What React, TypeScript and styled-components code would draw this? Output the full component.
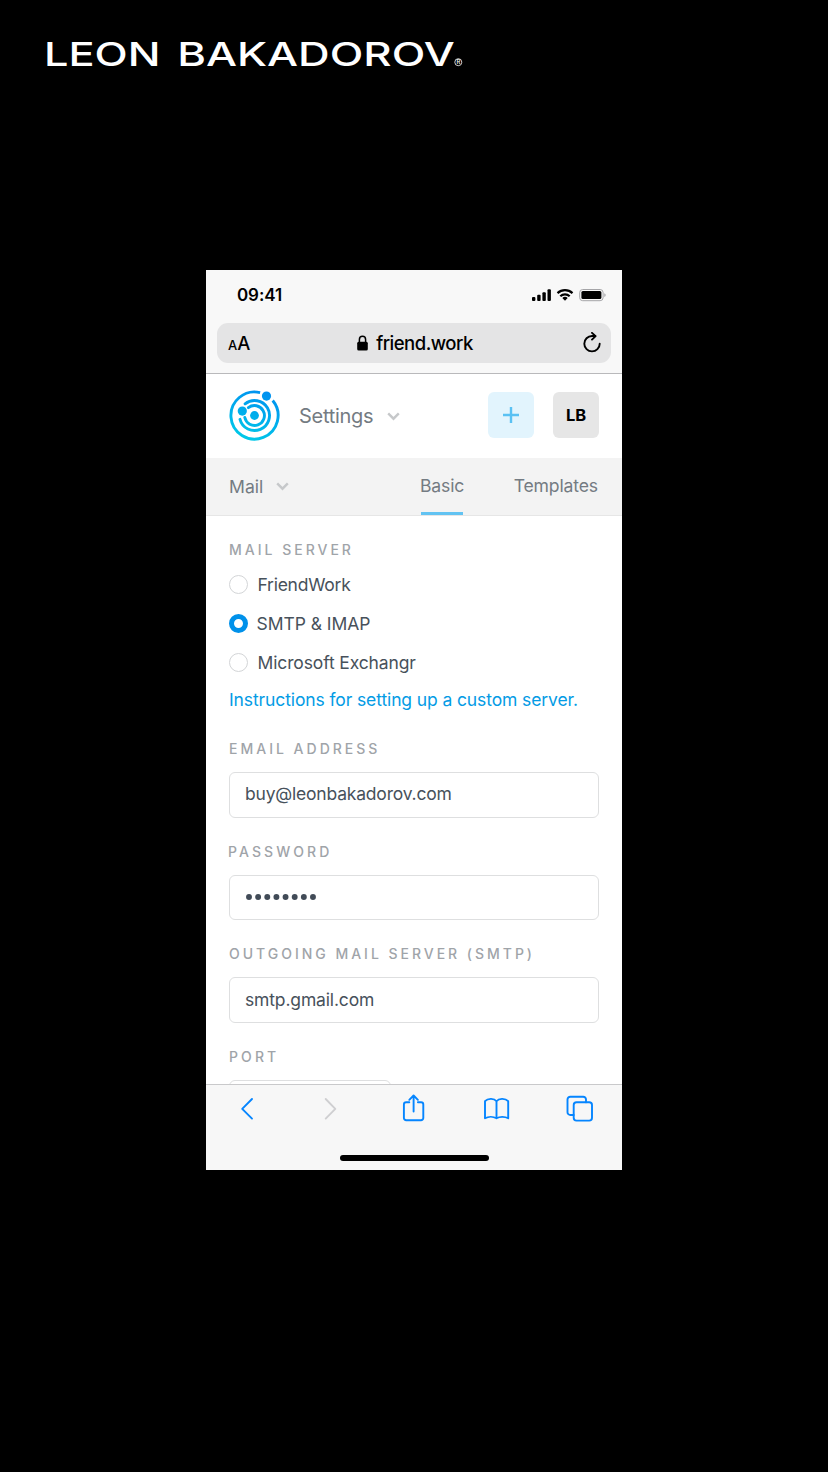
import React from "react";
import styled, { createGlobalStyle } from "styled-components";

const GlobalStyle = createGlobalStyle`
  *, *::before, *::after { box-sizing: border-box; }
  body { margin: 0; background: #000; }
`;

const Page = styled.main`
  width: 828px;
  height: 1472px;
  display: flex;
  flex-direction: column;
  align-items: center;
  background: #000;
  font-family: Inter, "Liberation Sans", sans-serif;
  overflow: hidden;
`;

const Masthead = styled.header`
  width: 100%;
  height: 270px;
  flex: none;
  padding: 20px 0 0 30px;
  svg { display: block; }
`;

const Phone = styled.section`
  width: 416px;
  height: 900px;
  display: flex;
  flex-direction: column;
  background: #fff;
  overflow: hidden;
`;

const BrowserTop = styled.div`
  height: 104px;
  flex: none;
  background: #f8f8f8;
  border-bottom: 1px solid #b9b9bb;
`;

const StatusBar = styled.div`
  height: 53px;
  padding: 0 16px 3px 31px;
  display: flex;
  align-items: center;
  justify-content: space-between;
  color: #000;
  font-size: 17px;
  font-weight: 600;
  letter-spacing: -0.1px;
`;

const AddressBar = styled.div`
  height: 40px;
  margin: 0 11px;
  padding: 0 9px 0 11px;
  display: flex;
  align-items: center;
  justify-content: space-between;
  border-radius: 11px;
  background: #e4e4e5;
  color: #000;
  font-weight: 500;
`;

const TextSize = styled.span`
  width: 20px;
  font-size: 18.5px;
  white-space: nowrap;
  small { font-size: 13px; }
`;

const Domain = styled.span`
  display: flex;
  align-items: center;
  gap: 8px;
  font-size: 18.5px;
  letter-spacing: -0.5px;
  padding-bottom: 1px;
`;

const AppHeader = styled.div`
  height: 84px;
  flex: none;
  padding: 0 23px 2px 22.5px;
  display: flex;
  align-items: center;
  > svg:nth-of-type(2) { margin-top: 3px; }
`;

const Title = styled.h1`
  margin: 0 13.5px 0 19.5px;
  padding-top: 2px;
  font-size: 20px;
  font-weight: 400;
  letter-spacing: -0.3px;
  color: #747b82;
`;

const Square = styled.button<{ $tone: "add" | "user" }>`
  width: 46px;
  height: 46px;
  padding: 0;
  border: 0;
  border-radius: 6px;
  display: flex;
  align-items: center;
  justify-content: center;
  font: 700 16.5px Inter, "Liberation Sans", sans-serif;
  color: #000;
  background: ${(p) => (p.$tone === "add" ? "#e2f4fd" : "#e6e6e6")};
`;

const Actions = styled.div`
  display: flex;
  gap: 19px;
  margin-left: auto;
`;

const TabBar = styled.nav`
  height: 58px;
  flex: none;
  padding: 0 24px 0 23px;
  display: flex;
  align-items: stretch;
  background: #f3f3f3;
  border-bottom: 1px solid #e6e6e6;
  color: #747b82;
  font-size: 17.6px;
  letter-spacing: -0.15px;
`;

const Section = styled.span`
  display: flex;
  align-items: center;
  gap: 13px;
  letter-spacing: 0;
  margin-right: auto;
  padding-bottom: 1px;
`;

const Tab = styled.a<{ $active?: boolean }>`
  display: flex;
  flex-direction: column;
  justify-content: center;
  align-items: center;
  margin-left: 49.5px;
  padding-top: 2px;
  line-height: 52px;
  &::after {
    content: "";
    width: 42px;
    height: 3px;
    background: ${(p) => (p.$active ? "#62c3f2" : "transparent")};
  }
`;

const Form = styled.form`
  flex: 1;
  min-height: 0;
  overflow: hidden;
  padding: 24px 23px 0;
  color: #47515b;
  font-size: 17.5px;
`;

const Label = styled.label<{ $shift?: number; $track?: number }>`
  display: block;
  height: 20px;
  margin-left: ${(p) => p.$shift ?? 0}px;
  line-height: 20px;
  font-size: 14px;
  font-weight: 500;
  letter-spacing: ${(p) => p.$track ?? 3}px;
  white-space: nowrap;
  color: #9fa4a9;
`;

const Radios = styled.div`
  padding-top: 5px;
  display: flex;
  flex-direction: column;
`;

const Option = styled.div<{ $track: number; $gap?: number }>`
  height: 39px;
  display: flex;
  align-items: center;
  gap: ${(p) => p.$gap ?? 9.5}px;
  letter-spacing: ${(p) => p.$track}px;
`;

const Dot = styled.i<{ $on?: boolean }>`
  width: 19px;
  height: 19px;
  border-radius: 50%;
  border: ${(p) => (p.$on ? "5.5px solid #0091ea" : "1.5px solid #d3d5d7")};
  background: #fff;
`;

const Help = styled.a`
  display: block;
  height: 34px;
  line-height: 34px;
  margin-top: 1px;
  letter-spacing: -0.11px;
  white-space: nowrap;
  color: #039be5;
`;

const Field = styled.div`
  margin-bottom: 24.1px;
  &:first-of-type { margin-top: 0; }
`;

const Credentials = styled.div`
  padding-top: 22px;
`;

const Input = styled.div<{ $width?: number; $track?: number }>`
  width: ${(p) => p.$width ?? 370}px;
  height: 45.6px;
  margin-top: 13px;
  padding: 0 15px 2px;
  display: flex;
  align-items: center;
  border: 1.5px solid #dedfe0;
  border-radius: 6px;
  letter-spacing: ${(p) => p.$track ?? -0.15}px;
`;

const Toolbar = styled.footer`
  height: 86px;
  flex: none;
  background: #f7f7f7;
  border-top: 1px solid #c9c9cb;
  display: flex;
  flex-direction: column;
  align-items: center;
  justify-content: space-between;
  padding: 7.5px 26px 9px;
`;

const Tools = styled.div`
  width: 100%;
  display: flex;
  justify-content: space-between;
  svg { display: block; }
`;

const HomeIndicator = styled.div`
  width: 149px;
  height: 6px;
  border-radius: 3px;
  background: #000;
`;

const Wordmark = () => (
  <svg width="450" height="66" viewBox="30 20 450 66" fill="#fff" fontFamily="Inter, sans-serif">
    <g fontSize="33" fontWeight="500">
      <text x="44" y="66" textLength="116.5" lengthAdjust="spacingAndGlyphs">LEON</text>
      <text x="177.2" y="66" textLength="277.5" lengthAdjust="spacingAndGlyphs">BAKADOROV</text>
    </g>
    <circle cx="458.3" cy="62.2" r="3.5" fill="none" stroke="#fff" strokeWidth="0.8" />
    <text x="458.4" y="64.4" fontSize="6" fontWeight="500" textAnchor="middle">R</text>
  </svg>
);

const StatusIcons = () => (
  <svg width="75" height="14" viewBox="0 0 75 14">
    <rect x="1" y="9" width="3.4" height="4" rx="1" />
    <rect x="6.2" y="6.8" width="3.4" height="6.2" rx="1" />
    <rect x="11.4" y="4.2" width="3.4" height="8.8" rx="1" />
    <rect x="16.5" y="1.2" width="3.4" height="11.8" rx="1" />
    <g fill="none" stroke="#000" strokeWidth="2.2">
      <path d="M26.5 5.1A11.2 11.2 0 0 1 41.5 5.1" />
      <path d="M29.3 8.2A6.8 6.8 0 0 1 38.7 8.2" />
    </g>
    <path d="M31.3 10A4.2 4.2 0 0 1 36.7 10L34 12.8Z" />
    <rect x="48.7" y="1.5" width="23.4" height="11.2" rx="3" fill="none" stroke="#a5a5a8" />
    <rect x="50.4" y="3.1" width="20" height="8" rx="1.5" />
    <path d="M73.3 5.2a2 2 0 0 1 0 3.8Z" fill="#a5a5a8" />
  </svg>
);

const Lock = () => (
  <svg width="11" height="16" viewBox="0 0 11 16">
    <path d="M2.4 7.5V4.4a3.1 3.1 0 0 1 6.2 0v3.1" fill="none" stroke="#000" strokeWidth="1.5" />
    <rect x="0.2" y="6.8" width="10.6" height="8.6" rx="1.5" />
  </svg>
);

const Reload = () => (
  <svg width="20" height="22" viewBox="0 0 20 22" fill="none" stroke="#000" strokeWidth="1.9" strokeLinecap="round" strokeLinejoin="round">
    <path d="M17.7 11.7A7.7 7.7 0 1 1 10 4h3.2" />
    <path d="M10 0.9l3.6 3.2-3.6 3.5" />
  </svg>
);

const Orbit = () => (
  <svg width="51" height="51" viewBox="-25.5 -25.5 51 51">
    <defs>
      <linearGradient id="orbit" gradientUnits="userSpaceOnUse" x1="10" y1="-24" x2="-8" y2="24">
        <stop offset="0" stopColor="#0091f0" />
        <stop offset="1" stopColor="#00c9e8" />
      </linearGradient>
    </defs>
    <g fill="none" stroke="url(#orbit)" strokeWidth="2.9">
      <path d="M5.6 -22.9A23.6 23.6 0 1 0 18.2 -15" />
      <path d="M-9.4 -11.7A15 15 0 1 1 -14.5 3.8" strokeLinecap="round" />
      <path d="M-6.1 -7.8A9.9 9.9 0 1 1 -9.7 2" strokeLinecap="round" />
    </g>
    <g fill="url(#orbit)">
      <circle r="4.4" />
      <circle cx="12" cy="-19.4" r="4.6" />
      <circle cx="-12.2" cy="-4.4" r="4.6" />
    </g>
  </svg>
);

const Chevron = () => (
  <svg width="13" height="9" viewBox="0 0 13 9" fill="none" stroke="#c6c8ca" strokeWidth="2.4">
    <path d="M1.2 1.4l5.3 5.3 5.3-5.3" />
  </svg>
);

const Plus = () => (
  <svg width="16" height="16" viewBox="0 0 16 16" stroke="#5ac1f3" strokeWidth="2.4">
    <path d="M8 0v16M0 8h16" />
  </svg>
);

const Mask = () => (
  <svg width="74" height="8" viewBox="0 0 74 8" fill="#414b57" role="img" aria-label="Hidden password">
    {Array.from({ length: 8 }, (_, i) => (
      <circle key={i} cx={4 + i * 9.14} cy="5" r="2.95" />
    ))}
  </svg>
);

const ToolIcon = ({ color = "#0585ff", children }: { color?: string; children: React.ReactNode }) => (
  <svg width="32" height="32" viewBox="0 0 32 32" fill="none" stroke={color} strokeWidth="1.9" strokeLinecap="round" strokeLinejoin="round">
    {children}
  </svg>
);

export default function App() {
  return (
    <Page>
      <GlobalStyle />
      <Masthead><Wordmark /></Masthead>
      <Phone>
        <BrowserTop>
          <StatusBar><span>09:41</span><StatusIcons /></StatusBar>
          <AddressBar>
            <TextSize><small>A</small>A</TextSize>
            <Domain><Lock />friend.work</Domain>
            <Reload />
          </AddressBar>
        </BrowserTop>
        <AppHeader>
          <Orbit />
          <Title>Settings</Title>
          <Chevron />
          <Actions>
            <Square $tone="add" type="button" aria-label="Add"><Plus /></Square>
            <Square $tone="user" type="button">LB</Square>
          </Actions>
        </AppHeader>
        <TabBar>
          <Section>Mail<Chevron /></Section>
          <Tab $active>Basic</Tab>
          <Tab>Templates</Tab>
        </TabBar>
        <Form>
          <Label>MAIL SERVER</Label>
          <Radios>
            <Option $track={-0.25}><Dot />FriendWork</Option>
            <Option $track={-0.05} $gap={8.5}><Dot $on />SMTP &amp; IMAP</Option>
            <Option $track={-0.13}><Dot />Microsoft Exchangr</Option>
          </Radios>
          <Help>Instructions for setting up a custom server.</Help>
          <Credentials>
            <Field>
              <Label>EMAIL ADDRESS</Label>
              <Input $track={-0.2}>buy@leonbakadorov.com</Input>
            </Field>
            <Field>
              <Label $shift={-1} $track={3.1}>PASSWORD</Label>
              <Input><Mask /></Input>
            </Field>
            <Field>
              <Label $track={2.98}>OUTGOING MAIL SERVER (SMTP)</Label>
              <Input>smtp.gmail.com</Input>
            </Field>
            <Field>
              <Label $track={3.1}>PORT</Label>
              <Input $width={162} />
            </Field>
          </Credentials>
        </Form>
        <Toolbar>
          <Tools>
            <ToolIcon><path d="M20 6L10.2 15.800 20 25.600" /></ToolIcon>
            <ToolIcon color="#cfcfd1"><path d="M10.700 6L20.300 15.800l-9.600 9.800" /></ToolIcon>
            <ToolIcon>
              <path d="M11.300 9.300H8.200a2.300 2.300 0 0 0-2.300 2.300v13.300a2.300 2.300 0 0 0 2.300 2.300h14.800a2.300 2.300 0 0 0 2.300-2.300V11.600a2.300 2.300 0 0 0-2.300-2.300h-3.100" />
              <path d="M15.600 18.500V2.800M11.300 6.800l4.300-4.300 4.300 4.300" />
            </ToolIcon>
            <ToolIcon>
              <path d="M15.500 8.200C13.300 5.300 7 4.900 4 8.200V25.300C7.300 23.400 12.300 23.400 15.500 25.300 18.700 23.400 23.900 23.400 27.200 25.300V8.200C24.100 4.900 17.700 5.300 15.500 8.200V25.300" />
            </ToolIcon>
            <ToolIcon>
              <rect x="9.700" y="9.300" width="18.300" height="18.300" rx="2.800" />
              <path d="M9.700 22H6.300a2.800 2.800 0 0 1-2.800-2.800V6.500A2.800 2.800 0 0 1 6.300 3.700h12.900A2.800 2.800 0 0 1 22 6.500v2.800" />
            </ToolIcon>
          </Tools>
          <HomeIndicator />
        </Toolbar>
      </Phone>
    </Page>
  );
}
